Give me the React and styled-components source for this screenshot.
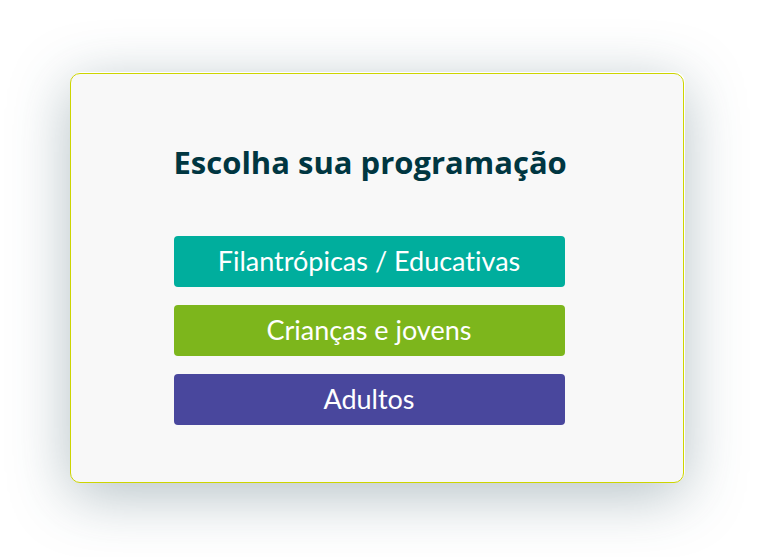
import React from "react";
import styled, { createGlobalStyle } from "styled-components";

const Global = createGlobalStyle`
  html, body { margin: 0; padding: 0; background: #ffffff; }
  body { font-family: "Lato", "Open Sans", sans-serif; }
`;

const Page = styled.div`
  width: 761px;
  height: 557px;
  padding: 73px 0 0 70px;
  box-sizing: border-box;
`;

const Card = styled.div`
  width: 614px;
  height: 410px;
  box-sizing: border-box;
  background: #f8f8f8;
  border: 1.5px solid #cdd500;
  border-radius: 10px;
  box-shadow: 1px -1px 0 #ffffff, 0 12px 60px rgba(45, 80, 95, 0.36);
  padding: 68px 0 0 102.5px;
  display: flex;
  flex-direction: column;
`;

const Title = styled.h1`
  margin: 0 0 54px 0;
  width: 391px;
  text-align: center;
  font-family: "Open Sans", sans-serif;
  font-weight: 700;
  font-size: 31px;
  line-height: 40px;
  color: #003641;
  white-space: nowrap;
`;

const Options = styled.div`
  display: flex;
  flex-direction: column;
  gap: 18.5px;
  width: 391px;
`;

const Option = styled.button`
  height: 50.5px;
  border: none;
  border-radius: 4px;
  background: ${(p) => p.$bg};
  color: #ffffff;
  font-family: "Lato", sans-serif;
  font-size: 27px;
  font-weight: 400;
  font-variant-ligatures: none;
  padding: 0 0 2px 0;
  cursor: pointer;
`;

export default function App() {
  return (
    <>
      <Global />
      <Page>
        <Card>
          <Title>Escolha sua programação</Title>
          <Options>
            <Option $bg="#00ae9d">Filantrópicas / Educativas</Option>
            <Option $bg="#7db61c">Crianças e jovens</Option>
            <Option $bg="#49479d">Adultos</Option>
          </Options>
        </Card>
      </Page>
    </>
  );
}
